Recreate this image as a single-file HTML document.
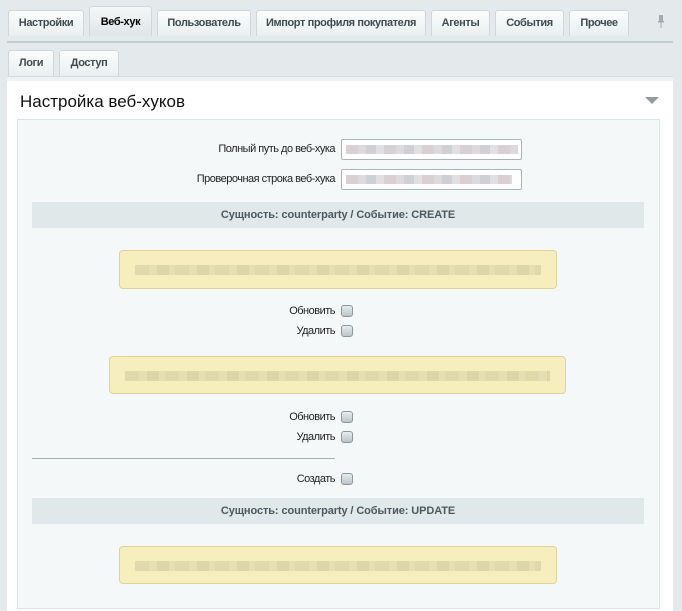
<!DOCTYPE html>
<html><head><meta charset="utf-8"><style>
*{margin:0;padding:0;box-sizing:border-box}
body{width:682px;height:600px;background:#e4eaec;font-family:"Liberation Sans",Arial,sans-serif;position:relative;overflow:hidden;color:#000}
.a{position:absolute}
.tab{position:absolute;top:10px;height:26px;background:linear-gradient(#fbfcfc,#e9eff0);border:1px solid #cfd7d9;border-bottom:none;border-radius:3px 3px 0 0;font-size:11px;font-weight:bold;color:#3f4b4e;text-align:center;line-height:24px;letter-spacing:-0.4px;white-space:nowrap}
.tab.act{top:6px;height:30px;background:linear-gradient(#f4f7f7,#dfe6e8);color:#000;line-height:30px}
.lbl{position:absolute;font-size:11px;color:#222;text-align:right;right:347px;letter-spacing:-0.5px}
.inp{position:absolute;left:341px;width:181px;height:21px;background:#fff;border:1px solid #a9b4b7;border-radius:2px}
.blur{position:absolute;background:repeating-linear-gradient(90deg,#d8d0d2 0 12px,#dcdadc 12px 20px,#cfd0d4 20px 30px,#e0dfe2 30px 38px)}
.hdr{position:absolute;left:32px;width:612px;height:26px;background:#e0e8ea;font-size:11px;font-weight:bold;color:#4b5a5e;text-align:center;line-height:26px;letter-spacing:-0.1px}
.yel{position:absolute;background:#f6eebd;border:1px solid #ddd39a;border-radius:4px}
.yb{position:absolute;left:15px;right:15px;top:14px;height:10px;background:repeating-linear-gradient(90deg,#e0d9ad 0 14px,#e6dfb2 14px 22px,#dcd5a8 22px 34px,#e6dfb4 34px 40px)}
.cb{position:absolute;left:341px;width:12px;height:12px;border:1px solid #8d979a;border-radius:3px;background:linear-gradient(#e8ecee,#bcc4c7)}
.cl{position:absolute;right:347px;font-size:11px;color:#222;letter-spacing:-0.5px}
</style></head><body>
<div class="tab" style="left:8px;width:76px">Настройки</div>
<div class="tab act" style="left:89px;width:63px">Веб-хук</div>
<div class="tab" style="left:157px;width:94px">Пользователь</div>
<div class="tab" style="left:256px;width:170px">Импорт профиля покупателя</div>
<div class="tab" style="left:431px;width:59px">Агенты</div>
<div class="tab" style="left:495px;width:69px">События</div>
<div class="tab" style="left:569px;width:60px">Прочее</div>
<div class="a" style="left:658px;top:15px">
<svg width="6" height="14"><rect x="1" y="0" width="4" height="7" fill="#9fabae"/><rect x="0" y="6" width="6" height="1.5" fill="#9fabae"/><rect x="2.5" y="7" width="1" height="6" fill="#9fabae"/></svg></div>
<div class="a" style="left:7px;top:41px;width:666px;height:2px;background:#c3cdd0"></div>
<div class="tab" style="top:50px;left:8px;width:46px">Логи</div>
<div class="tab" style="top:50px;left:59px;width:60px">Доступ</div>
<div class="a" style="left:7px;top:76px;width:666px;height:5px;background:#eef2f3;border-top:1px solid #d3dbdd"></div>
<div class="a" style="left:7px;top:81px;width:666px;height:530px;background:#fff"></div>
<div class="a" style="left:20px;top:92px;font-size:17px;color:#111">Настройка веб-хуков</div>
<div class="a" style="left:645px;top:97px;width:0;height:0;border-left:7px solid transparent;border-right:7px solid transparent;border-top:7px solid #939c9f"></div>
<div class="a" style="left:17px;top:119px;width:643px;height:490px;background:#f5f8f9;border:1px solid #dce4e6"></div>
<div class="lbl" style="top:143px">Полный путь до веб-хука</div>
<div class="inp" style="top:139px"><div class="blur" style="left:4px;top:5px;width:172px;height:9px"></div></div>
<div class="lbl" style="top:173px">Проверочная строка веб-хука</div>
<div class="inp" style="top:169px"><div class="blur" style="left:4px;top:5px;width:166px;height:9px"></div></div>
<div class="hdr" style="top:202px">Сущность: counterparty / Событие: CREATE</div>
<div class="yel" style="left:119px;top:250px;width:438px;height:39px"><div class="yb"></div></div>
<div class="cl" style="top:305px">Обновить</div><div class="cb" style="top:305px"></div>
<div class="cl" style="top:325px">Удалить</div><div class="cb" style="top:325px"></div>
<div class="yel" style="left:109px;top:356px;width:457px;height:38px"><div class="yb"></div></div>
<div class="cl" style="top:411px">Обновить</div><div class="cb" style="top:411px"></div>
<div class="cl" style="top:431px">Удалить</div><div class="cb" style="top:431px"></div>
<div class="a" style="left:32px;top:458px;width:303px;height:1px;background:#a6aeb0"></div>
<div class="cl" style="top:473px">Создать</div><div class="cb" style="top:473px"></div>
<div class="hdr" style="top:498px">Сущность: counterparty / Событие: UPDATE</div>
<div class="yel" style="left:119px;top:546px;width:438px;height:38px"><div class="yb"></div></div>
</body></html>
